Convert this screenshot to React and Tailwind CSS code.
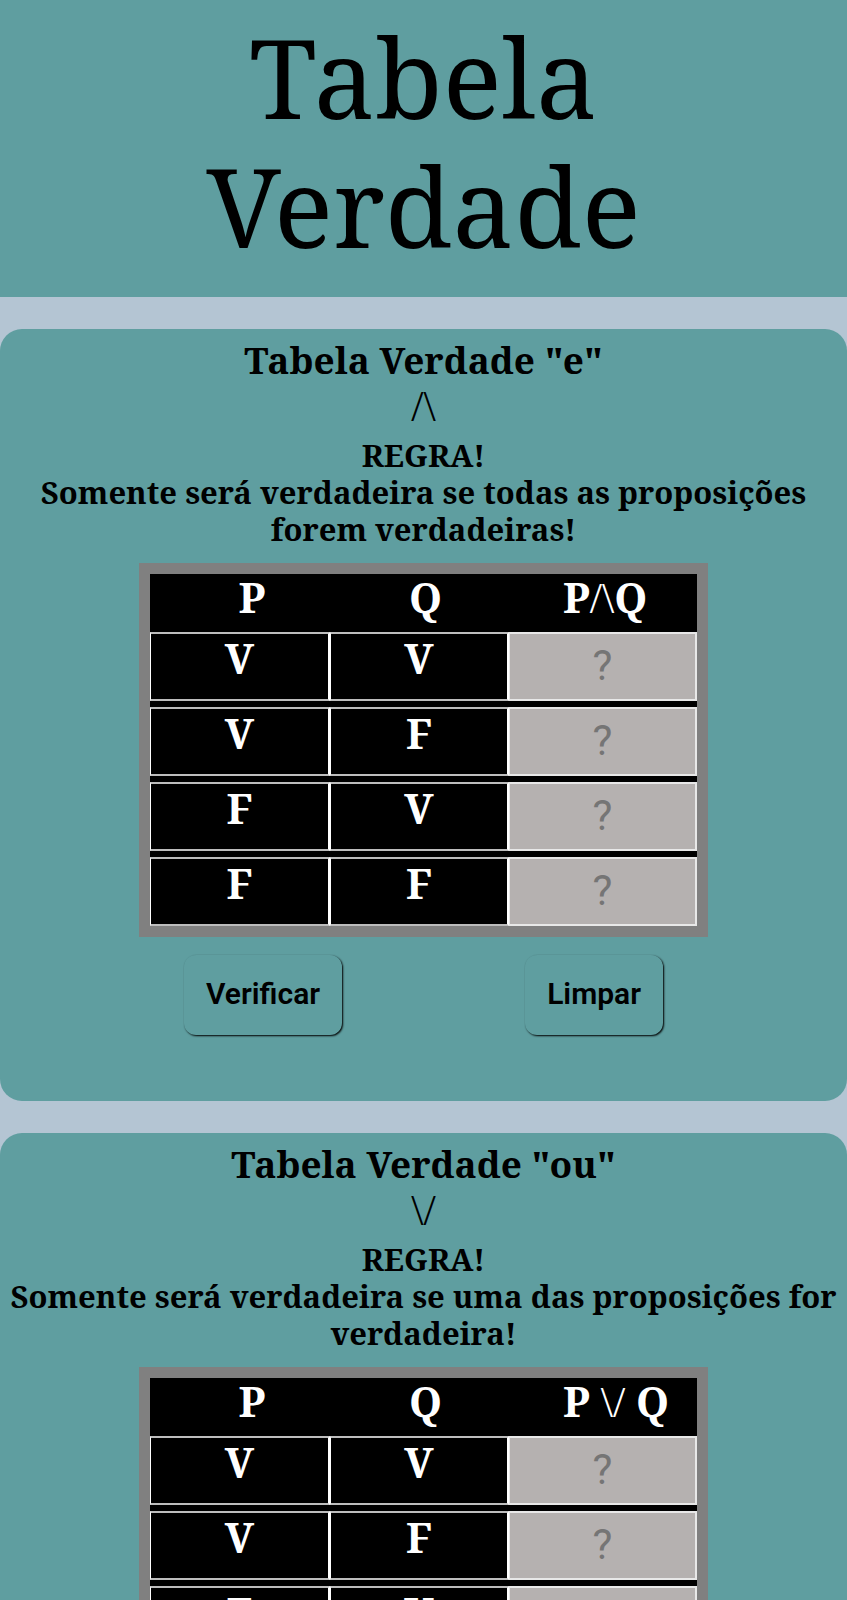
import React from "react";

const tables = [
  {
    id: "e",
    title: 'Tabela Verdade "e"',
    symbol: "/\\",
    spaced: false,
    rule: "Somente será verdadeira se todas as proposições forem verdadeiras!",
  },
  {
    id: "ou",
    title: 'Tabela Verdade "ou"',
    symbol: "\\/",
    spaced: true,
    rule: "Somente será verdadeira se uma das proposições for verdadeira!",
  },
];

const rows = [
  ["V", "V"],
  ["V", "F"],
  ["F", "V"],
  ["F", "F"],
];

function ActionButton({ type, children }) {
  return (
    <button
      type={type}
      className="h-20 rounded-xl bg-[#5f9ea0] px-[22px] pb-[2px] font-[Roboto,sans-serif] text-[30px] leading-9 font-semibold text-black shadow-[1px_1px_2px_#000]"
    >
      {children}
    </button>
  );
}

function Cell({ children, last }) {
  return (
    <td className={last ? "p-0" : "p-0 pb-[6px]"}>
      <div className="h-[69px] border-y-2 border-r-2 border-l border-x-white border-y-[#bdbdbd] text-center leading-[48px]">
        {children}
      </div>
    </td>
  );
}

function TruthTable({ table }) {
  return (
    <section className="rounded-[22px] bg-[#5f9ea0] pt-2 pb-[66px] text-center">
      <h2 className="text-[37px] leading-[46px] font-bold">{table.title}</h2>
      <p className="mt-[2px] font-['Liberation_Serif',serif] text-[44px] leading-[44px]">
        {table.symbol}
      </p>
      <p className="mt-2 px-2 text-[31px] leading-[37px] font-bold">
        REGRA!
        <br />
        {table.rule}
      </p>
      <form className="mx-auto mt-[15px] w-full max-w-[569px]">
        <table className="w-full table-fixed border-separate border-spacing-0 border-[11px] border-[#808080] bg-black text-[42px] font-bold text-white">
          <colgroup>
            <col className="w-[180px]" />
            <col className="w-[179px]" />
            <col />
          </colgroup>
          <thead>
            <tr className="h-[58px] align-top leading-[46px]">
              <th className="p-0 pl-6">P</th>
              <th className="p-0 pl-3">Q</th>
              <th className="p-0 pl-[54px] text-left whitespace-nowrap">
                P{table.spaced && " "}
                <span className="font-['Liberation_Serif',serif] text-[44px] leading-none font-normal">
                  {table.symbol}
                </span>
                {table.spaced && " "}Q
              </th>
            </tr>
          </thead>
          <tbody>
            {rows.map(([p, q], i) => {
              const last = i === rows.length - 1;
              return (
                <tr key={i} className="align-top">
                  <Cell last={last}>{p}</Cell>
                  <Cell last={last}>{q}</Cell>
                  <td className={last ? "p-0" : "p-0 pb-[6px]"}>
                    <input
                      type="text"
                      name={`${table.id}-${i}`}
                      aria-label={`${p} ${table.symbol} ${q}`}
                      placeholder="?"
                      className="block h-[69px] w-full border-2 border-l border-[#e8e8e8] bg-[#b5b1b0] pb-[3px] text-center font-[Roboto,sans-serif] text-[42px] font-normal text-black placeholder:text-[#757575]"
                    />
                  </td>
                </tr>
              );
            })}
          </tbody>
        </table>
        <div className="mt-[18px] flex justify-between px-[45px]">
          <ActionButton type="button">Verificar</ActionButton>
          <ActionButton type="reset">Limpar</ActionButton>
        </div>
      </form>
    </section>
  );
}

export default function App() {
  return (
    <div className="min-h-screen bg-[#b4c5d3] font-['Noto_Serif','DejaVu_Serif_Condensed','DejaVu_Serif',serif] text-black">
      <header className="bg-[#5f9ea0] px-40 pt-3 pb-[27px] text-center">
        <h1 className="text-[110px] leading-[129px]">Tabela Verdade</h1>
      </header>
      <main className="flex flex-col gap-8 py-8">
        {tables.map((table) => (
          <TruthTable key={table.id} table={table} />
        ))}
      </main>
    </div>
  );
}
